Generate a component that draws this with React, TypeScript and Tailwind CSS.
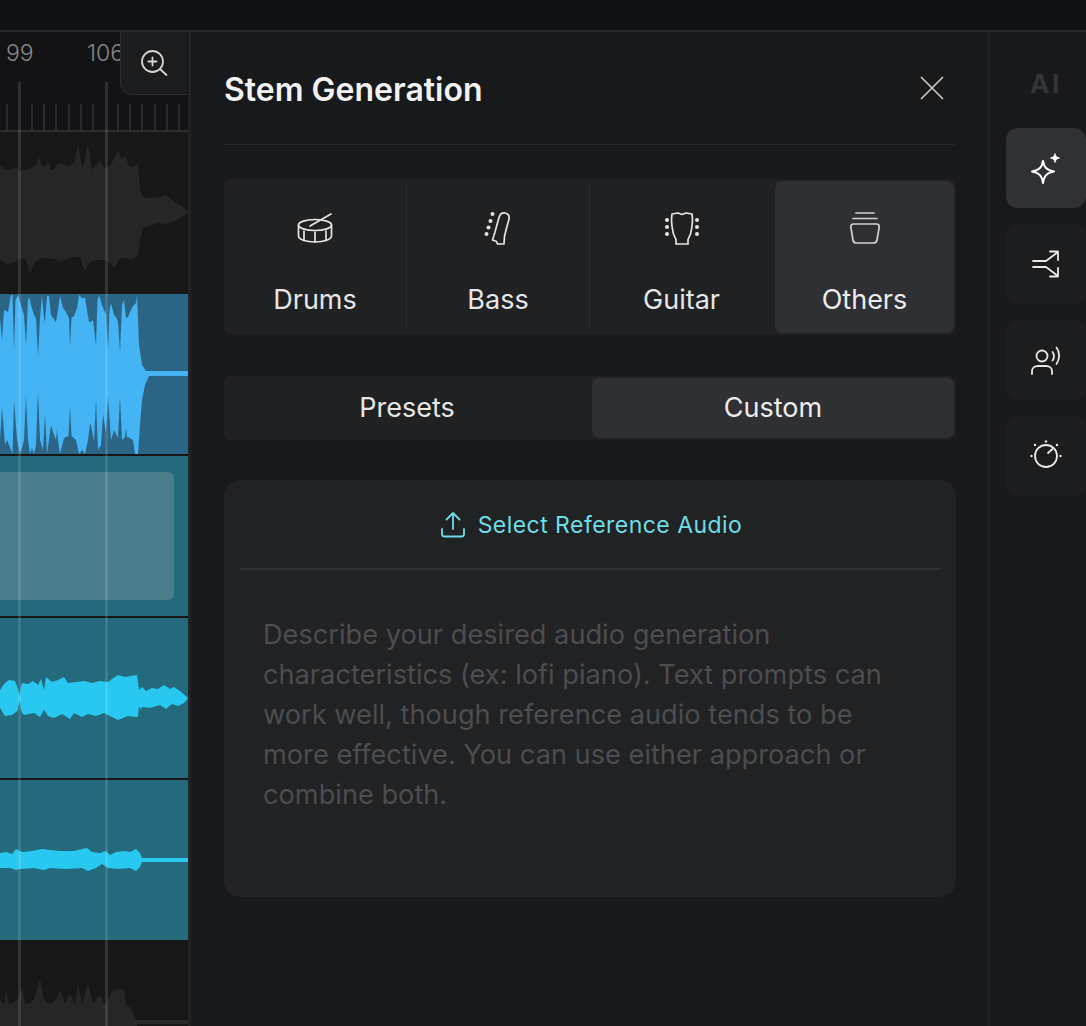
import type { ReactNode } from "react"

const tickXs = [7, 32, 44, 56, 69, 81, 93, 118, 130, 142, 155, 167, 179]

const wave1 =
  "0,166 5,169 8,170 14,168 17,167 19,172 25,170 32,167 36,165 39,157 42,166 44,167 47,163 48,162 51,169 53,170 57,165 60,163 65,165 70,166 74,162 77,150 78,145 79,150 82,168 85,160 87,147 88,144 89,150 92,170 96,165 99,162 100,160 103,166 105,168 110,166 116,155 118,150 120,156 122,160 124,157 125,156 128,163 130,167 134,166 138,163 139,178 140,190 143,197 150,198 155,197 160,198 165,195 170,198 172,200 180,205 188,211 188,213 180,218 172,222 165,224 158,223 150,226 146,227 143,228 140,240 138,255 134,258 130,260 125,258 120,258 117,263 115,268 110,263 105,260 97,260 90,262 87,266 85,272 83,266 80,258 74,257 70,258 65,260 60,262 54,259 45,258 40,259 35,262 32,268 30,275 28,266 25,258 20,259 15,262 8,265 0,260"

const wave2 =
  "0,318 2,340 4,310 8,312 11,295 12.5,295 14,350 15.5,300 18,295 21,305 24,315 26,345 28,300 29,297 31,305 34,315 36,318 38,356 40,318 42,295 44,318 45,322 47,296 49,296 51,315 53,318 56,322 58,310 60,296 63,308 66,312 69,318 70,347 71.5,318 74,316 77,308 79,295 82,298 85,298 87,310 89,322 90.5,322 93,320 96,345 97.5,300 99,295 102,305 104,310 106,314 108,350 109.5,310 111,303 114,315 116,317 118,322 120,352 122,305 124,300 126,318 128,317 131,310 133,306 136,303 137,295 138,320 139,345 142,365 146,371 188,371 188,376 149,376 145,385 142,400 140,425 138,454 135,454 133,440 130,438 127,437 126,428 125,437 122,440 120,396 118,438 115,432 114,430 113,434 111,440 108,397 106,433 103,414 101,445 98,450 96,400 94,442 91,425 90,424 88,440 85,454 82,450 79,454 76,440 71.5,436 70,407 68.5,436 64,438 60,454 58,440 57,429 56,440 53,432 51,425 49,440 47,454 45,414 43,450 40,440 38,391 36,445 34,454 32,448 30,454 28,440 26,396 24,440 22,448 20,454 17,440 14,400 12.5,454 11,450 7,440 5,445 2,407 0,440"

const wave4 =
  "0,690 4,684 9,680 15,681 17,686 19.5,695 21,686 22,683 28,684 33,681 38,685 41,679 44,690 46,677 52,682 58,680 64,677 68,683 76,682 84,681 92,683 100,681 108,682 112,679 118,675 125,677 137,675 139,690 142,687 146,691 152,688 158,689 164,685 170,689 174,687 180,691 188,698 184,703 178,706 172,704 166,709 160,705 150,708 142,707 141,710 139,706 138,717 128,716 118,720 112,717 104,713 96,716 88,714 82,717 74,713 70,719 62,714 54,718 48,716 44,710 40,717 34,713 24,715 21.5,712 19.5,701 17.5,711 12,715 5,716 0,708"

const wave5 =
  "0,853 6,852 12,854 16,849 22,852 32,851 42,849 50,850 60,851 74,851 82,849 87,848 92,852 100,853 106,851 110,855 116,852 124,851 130,852 136,849 140,853 142,858 188,858 188,862 142,862 140,867 136,871 130,868 118,869 108,868 102,864 96,868 88,871 82,868 66,869 50,868 44,870 34,868 20,869 16,870 10,868 0,868"

const wave6 =
  "0,1026 0,1000 4,1005 6,989 9,1005 14,1002 18,1000 22,987 25,1004 30,1003 34,1000 40,979 44,1000 50,1004 56,1000 60,990 65,1003 70,994 75,1005 78,985 82,1004 88,983 93,1003 100,995 105,1005 112,992 118,989 124,990 126,1005 131,1008 136,1020 137,1026"

function Wave({ box, points, fill }: { box: string; points: string; fill: string }) {
  return (
    <svg viewBox={box} className="block h-[160px] w-[188px]">
      <polygon points={points} fill={fill} />
    </svg>
  )
}

function DrumIcon() {
  return (
    <svg width="40" height="40" viewBox="0 0 40 40" fill="none" stroke="currentColor" strokeWidth="1.7" strokeLinecap="round" strokeLinejoin="round">
      <ellipse cx="20" cy="17" rx="16.5" ry="5.5" />
      <path d="M3.5 17V28C3.5 31.5 11 34 20 34C29 34 36.5 31.5 36.5 28V17" />
      <path d="M9 23V32.5M20 24V34M31 23V32.5" />
      <path d="M15 18L36 6" />
    </svg>
  )
}

function BassIcon() {
  return (
    <svg width="40" height="40" viewBox="0 0 40 40" fill="none" stroke="currentColor" strokeWidth="1.7" strokeLinejoin="round">
      <path d="M21 9.5C22 6 24 4.5 27 5C30 5.5 31.5 8 31 11C30 15 28 21 26.5 28.5L26 36H19.5L18.5 33.5L14.5 32L17 24Z" />
      <g fill="currentColor" stroke="none">
        <circle cx="14.5" cy="6" r="2" />
        <circle cx="12.5" cy="13" r="2" />
        <circle cx="10.5" cy="19.5" r="2" />
        <circle cx="8.5" cy="26" r="2" />
      </g>
    </svg>
  )
}

function GuitarIcon() {
  return (
    <svg width="40" height="40" viewBox="0 0 40 40" fill="none" stroke="currentColor" strokeWidth="1.7" strokeLinejoin="round">
      <path d="M10 6L16 5L20 6.5L24 5L30 6C31 12 30 20 28.5 26L26 31.5V36H14V31.5L11.5 26C10 20 9 12 10 6Z" />
      <g fill="currentColor" stroke="none">
        <circle cx="5" cy="12" r="2" />
        <circle cx="5" cy="19" r="2" />
        <circle cx="5" cy="26" r="2" />
        <circle cx="35" cy="12" r="2" />
        <circle cx="35" cy="19" r="2" />
        <circle cx="35" cy="26" r="2" />
      </g>
    </svg>
  )
}

function OthersIcon() {
  return (
    <svg width="40" height="40" viewBox="0 0 40 40" fill="none" stroke="#d2d2d2" strokeWidth="1.7" strokeLinecap="round" strokeLinejoin="round">
      <path d="M11 5H29M8 10.5H32" />
      <path d="M8.5 16H31.5C33.2 16 34.4 17.4 34.2 19L32 32C31.7 34 30.4 35 28.5 35H11.5C9.6 35 8.3 34 8 32L5.8 19C5.6 17.4 6.8 16 8.5 16Z" />
    </svg>
  )
}

function SparkIcon() {
  return (
    <svg width="32" height="32" viewBox="0 0 32 32" fill="none" stroke="currentColor" strokeWidth="2" strokeLinejoin="round">
      <path d="M13 9C14 15 16.5 18 24 19.5C16.5 21 14 24 13 31C12 24 9.5 21 2 19.5C9.5 18 12 15 13 9Z" />
      <path d="M25 1.5C25.5 4 26.5 5.2 29.5 6C26.5 6.8 25.5 8 25 10.5C24.5 8 23.5 6.8 20.5 6C23.5 5.2 24.5 4 25 1.5Z" fill="currentColor" strokeWidth="0.8" />
    </svg>
  )
}

function SplitIcon() {
  return (
    <svg width="32" height="32" viewBox="0 0 32 32" fill="none" stroke="currentColor" strokeWidth="1.8" strokeLinecap="round" strokeLinejoin="round">
      <path d="M3 13H16L28 4M20 3.5H28V12" />
      <path d="M3 19H16L28 28M28 20V28.5H20" />
    </svg>
  )
}

function VoiceIcon() {
  return (
    <svg width="32" height="32" viewBox="0 0 32 32" fill="none" stroke="currentColor" strokeWidth="1.8" strokeLinecap="round" strokeLinejoin="round">
      <circle cx="12" cy="12" r="5.5" />
      <path d="M2 30V27C2 24 4.5 22 8 22H16C19.5 22 22 24 22 27V30" />
      <path d="M22.5 8C24.3 10.5 24.3 14 22.5 16.5M26.5 3.5C30 8 30 15 26.5 20" />
    </svg>
  )
}

function KnobIcon() {
  return (
    <svg width="32" height="32" viewBox="0 0 32 32" fill="none" stroke="currentColor" strokeWidth="1.8" strokeLinecap="round">
      <circle cx="16" cy="16" r="11" />
      <path d="M18 13L22.5 9" />
      <g fill="currentColor" stroke="none">
        <circle cx="16" cy="1.5" r="1.2" />
        <circle cx="5" cy="5" r="1.2" />
        <circle cx="27" cy="5" r="1.2" />
        <circle cx="1.5" cy="16" r="1.2" />
        <circle cx="30.5" cy="16" r="1.2" />
      </g>
    </svg>
  )
}

function StemCell({ icon, label, active }: { icon: ReactNode; label: string; active?: boolean }) {
  return (
    <div className={active ? "m-0.5 flex flex-col items-center rounded-lg bg-[#2f3034] pt-[27px] text-[#ececec]" : "flex flex-col items-center pt-[24px] text-[#e6e6e6]"}>
      {icon}
      <span className="mt-[34px] text-[27px] leading-[36px]">{label}</span>
    </div>
  )
}

function RailButton({ children, active }: { children: ReactNode; active?: boolean }) {
  return (
    <div className={active ? "flex h-20 w-20 items-center justify-center rounded-xl bg-[#303135] text-white" : "flex h-20 w-20 items-center justify-center rounded-xl bg-[#1c1d1f] text-[#e8e8e8]"}>
      {children}
    </div>
  )
}

export default function App() {
  return (
    <div className="flex h-[1026px] w-[1086px] flex-col overflow-hidden bg-[#18191b] font-['Inter',sans-serif]">
      <div className="h-[32px] shrink-0 border-b-2 border-[#26272a] bg-[#111214]" />

      <div className="flex min-h-0 flex-1">
        {/* timeline */}
        <div className="relative w-[188px] shrink-0 overflow-hidden bg-[#171718]">
          <div className="relative h-[100px] bg-[#131315]">
            <div className="flex h-[42px] items-center text-[23px] font-light text-[#858587]">
              <span className="ml-[6px] w-[81px]">99</span>
              <span>106</span>
            </div>
            <svg width="188" height="28" className="absolute left-0 top-[72px]">
              {tickXs.map((x) => (
                <line key={x} x1={x} x2={x} y1="0" y2="26" stroke="#333436" strokeWidth="1.5" />
              ))}
              <line x1="0" x2="188" y1="27" y2="27" stroke="#2b2c2e" strokeWidth="2" />
            </svg>
            <div className="absolute left-[120px] top-0 flex h-[63px] w-[67px] items-center justify-center rounded-bl-xl border-b border-l border-[#2b2c2f] bg-[#1b1c1e] text-[#d4d4d4]">
              <svg width="32" height="32" viewBox="0 0 32 32" fill="none" stroke="currentColor" strokeWidth="1.8" strokeLinecap="round">
                <circle cx="14.5" cy="14.5" r="10.5" />
                <path d="M14.5 10.5V18.5M10.5 14.5H18.5M22.5 22.5L28.5 28" />
              </svg>
            </div>
          </div>

          <Wave box="0 132 188 160" points={wave1} fill="#262626" />

          <div className="mt-0.5 bg-[#2c6485]">
            <Wave box="0 294 188 160" points={wave2} fill="#45b4f5" />
          </div>

          <div className="mt-0.5 h-[160px] bg-[#24697c] py-4 pr-[14px]">
            <div className="h-full rounded-r-md bg-[#4a7e8d]" />
          </div>

          <div className="mt-0.5 bg-[#24697c]">
            <Wave box="0 618 188 160" points={wave4} fill="#28c8f0" />
          </div>

          <div className="mt-0.5 bg-[#24697c]">
            <Wave box="0 780 188 160" points={wave5} fill="#28c8f0" />
          </div>

          <svg viewBox="0 940 188 86" className="block h-[86px] w-[188px]">
            <polygon points={wave6} fill="#262626" />
            <rect x="136" y="1020" width="52" height="4" fill="#2a2a2a" />
          </svg>

          {/* playheads over the tracks */}
          <div className="absolute bottom-0 left-[18px] top-[50px] w-[3px] bg-white/[0.12]" />
          <div className="absolute bottom-0 left-[105px] top-[50px] w-[3px] bg-white/[0.12]" />
        </div>

        {/* stem panel */}
        <div className="w-[802px] shrink-0 border-x-[3px] border-r-2 border-x-[#222326] px-[33px]">
          <div className="flex h-[113px] items-center justify-between border-b border-[#26272a]">
            <h1 className="pt-[3px] text-[32px] font-semibold text-[#f2f2f2]">Stem Generation</h1>
            <svg width="32" height="32" viewBox="0 0 32 32" fill="none" stroke="#c4c4c4" strokeWidth="1.7" strokeLinecap="round" className="mr-[7px]">
              <path d="M5.5 5.5L26.5 26.5M26.5 5.5L5.5 26.5" />
            </svg>
          </div>

          <div className="mt-[34px] grid h-[156px] w-[732px] grid-cols-4 rounded-lg bg-[#202123]">
            <div className="my-[5px] border-r border-[#2b2c2f]">
              <StemCell icon={<DrumIcon />} label="Drums" />
            </div>
            <div className="my-[5px] border-r border-[#2b2c2f]">
              <StemCell icon={<BassIcon />} label="Bass" />
            </div>
            <div className="my-[5px]">
              <StemCell icon={<GuitarIcon />} label="Guitar" />
            </div>
            <StemCell icon={<OthersIcon />} label="Others" active />
          </div>

          <div className="mt-[41px] grid h-16 w-[732px] grid-cols-[366px_1fr] rounded-lg bg-[#202123] p-0.5 text-[27px]">
            <div className="flex items-center justify-center pr-1 text-[#e6e6e6]">Presets</div>
            <div className="flex items-center justify-center rounded-lg bg-[#2f3034] text-[#ececec]">Custom</div>
          </div>

          <div className="mt-10 h-[417px] w-[732px] rounded-2xl bg-[#212224] px-4">
            <div className="flex h-[90px] items-center justify-center gap-[10px] border-b-2 border-[#303134] pt-[2px] pl-[2px] text-[23px] tracking-[0.02em] text-[#6fdde6]">
              <svg width="28" height="28" viewBox="0 0 28 28" fill="none" stroke="currentColor" strokeWidth="1.8" strokeLinecap="round" strokeLinejoin="round">
                <path d="M13 2V18M6.5 8.5L13 2L19.5 8.5" />
                <path d="M2 18V23C2 24.5 3 25.5 4.5 25.5H21.5C23 25.5 24 24.5 24 23V18" />
              </svg>
              <span>Select Reference Audio</span>
            </div>
            <p className="mt-[45px] w-[660px] pl-[23px] text-[27.2px] leading-[40px] text-[#4c4d50]">
              Describe your desired audio generation characteristics (ex: lofi piano). Text prompts can work well, though reference audio tends to be more effective. You can use either approach or combine both.
            </p>
          </div>
        </div>

        {/* rail */}
        <div className="flex flex-1 flex-col items-start pl-4">
          <div className="flex h-[96px] w-20 items-center justify-center pt-[6px] text-[26px] font-bold tracking-[0.1em] text-[#33353a]">AI</div>
          <div className="flex flex-col gap-4">
            <RailButton active>
              <SparkIcon />
            </RailButton>
            <RailButton>
              <SplitIcon />
            </RailButton>
            <RailButton>
              <VoiceIcon />
            </RailButton>
            <RailButton>
              <KnobIcon />
            </RailButton>
          </div>
        </div>
      </div>
    </div>
  )
}
